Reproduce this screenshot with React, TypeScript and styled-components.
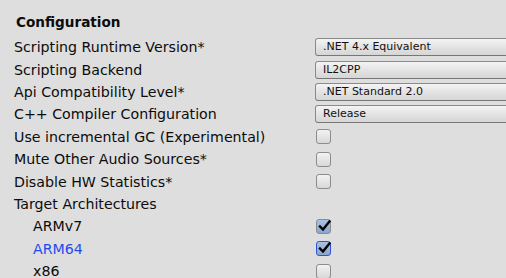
import React from 'react'
import styled, { createGlobalStyle } from 'styled-components'

const GlobalStyle = createGlobalStyle`
  html, body {
    margin: 0;
    padding: 0;
    background: #dedede;
    overflow: hidden;
  }
`

const Panel = styled.div`
  width: 506px;
  height: 278px;
  box-sizing: border-box;
  padding: 13px 0 0 14px;
  font-family: 'DejaVu Sans', Verdana, sans-serif;
  font-size: 14.2px;
  color: #0c0c0c;
  background: #dedede;
`

const Heading = styled.div`
  height: 23px;
  line-height: 18px;
  font-size: 13.6px;
  font-weight: bold;
  padding-left: 2px;
`

const Row = styled.div`
  display: grid;
  grid-template-columns: 301px 1fr;
  align-items: center;
  height: 22.4px;
`

const Label = styled.span<{ $indent?: boolean; $active?: boolean }>`
  padding-left: ${(p) => (p.$indent ? '19px' : '0')};
  color: ${(p) => (p.$active ? '#1f4cf0' : '#0c0c0c')};
  white-space: nowrap;
`

const Dropdown = styled.div`
  height: 18px;
  margin-right: -20px;
  box-sizing: border-box;
  border: 1px solid #8a8a8a;
  border-bottom-color: #777;
  border-radius: 3px;
  background: linear-gradient(#f4f4f4, #e2e2e2 55%, #d6d6d6);
  font-size: 11px;
  line-height: 16px;
  padding-left: 7px;
  color: #111;
`

const Box = styled.div<{ $checked?: boolean; $focus?: boolean }>`
  width: 15px;
  height: 15px;
  box-sizing: border-box;
  border: 1.5px solid ${(p) => (p.$focus ? '#2f55d6' : '#8c8c8c')};
  border-radius: 3px;
  background: ${(p) =>
    p.$checked
      ? 'linear-gradient(#a9c0e2, #8aa6cf)'
      : 'linear-gradient(#f2f2f2, #d8d8d8)'};
  position: relative;
  margin-left: 1px;
`

const Check = () => (
  <svg width="15" height="15" viewBox="0 0 15 15" style={{ position: 'absolute', left: '0px', top: '-1px' }}>
    <path d="M3 7.5 L6 10.5 L12.5 2.5" fill="none" stroke="#000" strokeWidth="2.4" strokeLinecap="square" />
  </svg>
)

type Item =
  | { label: string; kind: 'select'; value: string }
  | { label: string; kind: 'check'; checked?: boolean; focus?: boolean; indent?: boolean }
  | { label: string; kind: 'none' }

const items: Item[] = [
  { label: 'Scripting Runtime Version*', kind: 'select', value: '.NET 4.x Equivalent' },
  { label: 'Scripting Backend', kind: 'select', value: 'IL2CPP' },
  { label: 'Api Compatibility Level*', kind: 'select', value: '.NET Standard 2.0' },
  { label: 'C++ Compiler Configuration', kind: 'select', value: 'Release' },
  { label: 'Use incremental GC (Experimental)', kind: 'check' },
  { label: 'Mute Other Audio Sources*', kind: 'check' },
  { label: 'Disable HW Statistics*', kind: 'check' },
  { label: 'Target Architectures', kind: 'none' },
  { label: 'ARMv7', kind: 'check', checked: true, indent: true },
  { label: 'ARM64', kind: 'check', checked: true, focus: true, indent: true },
  { label: 'x86', kind: 'check', indent: true },
]

export default function App() {
  return (
    <>
      <GlobalStyle />
      <Panel>
        <Heading>Configuration</Heading>
        {items.map((it) => (
          <Row key={it.label}>
            <Label
              $indent={it.kind === 'check' && it.indent}
              $active={it.kind === 'check' && it.focus}
            >
              {it.label}
            </Label>
            {it.kind === 'select' && <Dropdown>{it.value}</Dropdown>}
            {it.kind === 'check' && (
              <Box $checked={it.checked} $focus={it.focus}>
                {it.checked && <Check />}
              </Box>
            )}
          </Row>
        ))}
      </Panel>
    </>
  )
}
